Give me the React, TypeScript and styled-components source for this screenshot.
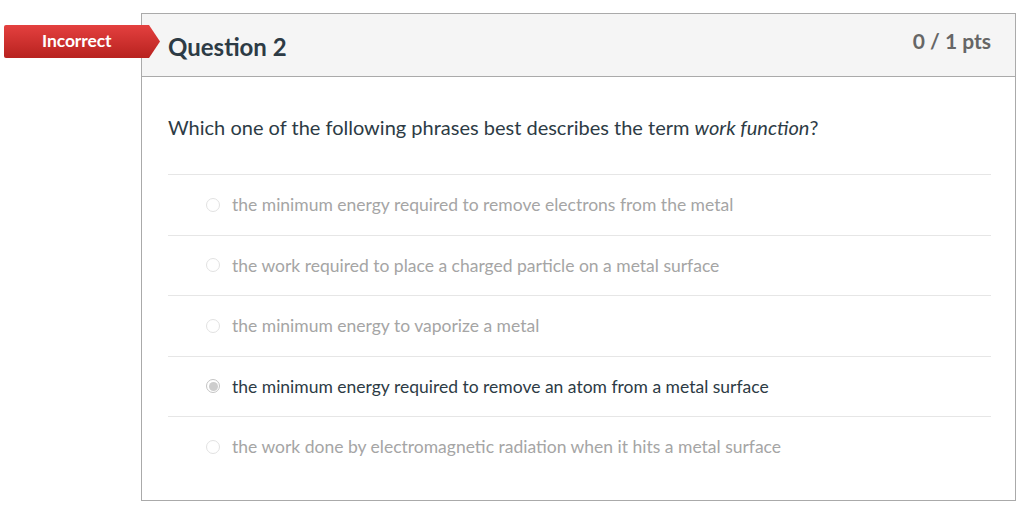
import styled, { createGlobalStyle } from 'styled-components';

const Global = createGlobalStyle`
  body {
    margin: 0;
    background: #fff;
    font-family: Lato, "Open Sans", "Liberation Sans", sans-serif;
  }
`;

const Page = styled.div`
  position: relative;
  padding: 13px 5px 0 141px;
`;

const Banner = styled.div`
  position: absolute;
  left: 4px;
  top: 25px;
  width: 156px;
  height: 33px;
  background: linear-gradient(#e4403f, #b8221f);
  clip-path: polygon(0 0, 145px 0, 156px 50%, 145px 100%, 0 100%);
  border-radius: 2px 0 0 2px;
  color: #fff;
  font-weight: 700;
  font-size: 17.5px;
  letter-spacing: -0.1px;
  display: flex;
  align-items: center;
  padding-left: 38px;
  box-sizing: border-box;
  padding-bottom: 2px;
`;

const Card = styled.div`
  border: 1px solid #aaa;
  height: 488px;
  box-sizing: border-box;
`;

const Header = styled.div`
  background: #f5f5f5;
  border-bottom: 1px solid #aaa;
  height: 63px;
  box-sizing: border-box;
  display: flex;
  justify-content: space-between;
  padding: 0 24px 0 26px;
`;

const Title = styled.h2`
  margin: 0;
  align-self: center;
  font-size: 24px;
  font-weight: 700;
  color: #2d3b45;
  padding-top: 2px;
`;

const Points = styled.div`
  font-size: 21px;
  font-weight: 700;
  color: #666;
  padding-top: 14px;
`;

const Body = styled.div`
  padding: 37px 24px 0 26px;
`;

const Prompt = styled.p`
  margin: 0 0 33px;
  font-size: 20px;
  color: #2d3b45;
  line-height: 27px;
`;

const Answer = styled.div`
  display: flex;
  align-items: center;
  height: 60.5px;
  box-sizing: border-box;
  border-top: 1px solid #e6e6e6;
  padding-left: 38px;
`;

const Radio = styled.span<{ $checked?: boolean }>`
  width: 14px;
  height: 14px;
  flex-shrink: 0;
  box-sizing: border-box;
  border-radius: 50%;
  border: 1px solid ${p => (p.$checked ? '#c4c4c4' : '#e2e2e2')};
  background: #fff;
  margin-right: 12px;
  display: flex;
  align-items: center;
  justify-content: center;
  &::after {
    content: '';
    display: ${p => (p.$checked ? 'block' : 'none')};
    width: 9px;
    height: 9px;
    border-radius: 50%;
    background: #cdcdcd;
  }
`;

const AnswerText = styled.span<{ $selected?: boolean }>`
  font-size: 17.5px;
  color: ${p => (p.$selected ? '#2d3b45' : '#a5a5a5')};
`;

const answers = [
  'the minimum energy required to remove electrons from the metal',
  'the work required to place a charged particle on a metal surface',
  'the minimum energy to vaporize a metal',
  'the minimum energy required to remove an atom from a metal surface',
  'the work done by electromagnetic radiation when it hits a metal surface',
];
const selected = 3;

export default function App() {
  return (
    <Page>
      <Global />
      <Banner>Incorrect</Banner>
      <Card>
        <Header>
          <Title>Question 2</Title>
          <Points>0 / 1 pts</Points>
        </Header>
        <Body>
          <Prompt>
            Which one of the following phrases best describes the term <em>work function</em>?
          </Prompt>
          {answers.map((a, i) => (
            <Answer key={i}>
              <Radio $checked={i === selected} />
              <AnswerText $selected={i === selected}>{a}</AnswerText>
            </Answer>
          ))}
        </Body>
      </Card>
    </Page>
  );
}
